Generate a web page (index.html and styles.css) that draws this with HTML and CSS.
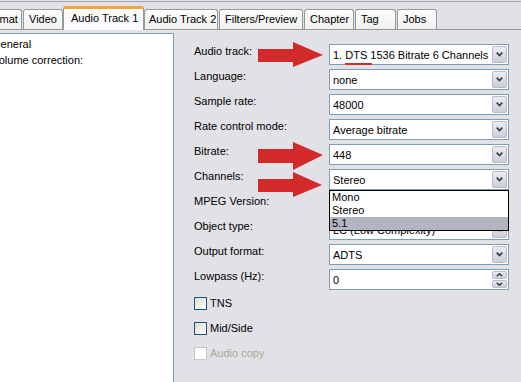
FILE: index.html
```html
<!DOCTYPE html>
<html>
<head>
<meta charset="utf-8">
<link rel="stylesheet" href="styles.css">
</head>
<body>
<div class="window">
  <div class="tabstrip">
    <div class="tab w-format">Format</div>
    <div class="tab w-video">Video</div>
    <div class="tab active w-at1">Audio Track 1</div>
    <div class="tab w-at2">Audio Track 2</div>
    <div class="tab w-filters">Filters/Preview</div>
    <div class="tab w-chapter">Chapter</div>
    <div class="tab w-tag">Tag</div>
    <div class="tab w-jobs">Jobs</div>
  </div>
  <div class="page">
    <div class="tree">
      <div class="tree-item">General</div>
      <div class="tree-item">Volume correction:</div>
    </div>
    <div class="form">
      <div class="grid">
        <div class="label">Audio track:</div>
        <div class="combo"><span class="val">1. DTS 1536 Bitrate 6 Channels</span><span class="btn"><svg width="7" height="5" viewBox="0 0 7 5"><path d="M0.7 0.7 L3.5 3.6 L6.3 0.7" stroke="#3c3c4c" stroke-width="1.7" fill="none"/></svg></span></div>
        <div class="label">Language:</div>
        <div class="combo"><span class="val">none</span><span class="btn"><svg width="7" height="5" viewBox="0 0 7 5"><path d="M0.7 0.7 L3.5 3.6 L6.3 0.7" stroke="#3c3c4c" stroke-width="1.7" fill="none"/></svg></span></div>
        <div class="label">Sample rate:</div>
        <div class="combo"><span class="val">48000</span><span class="btn"><svg width="7" height="5" viewBox="0 0 7 5"><path d="M0.7 0.7 L3.5 3.6 L6.3 0.7" stroke="#3c3c4c" stroke-width="1.7" fill="none"/></svg></span></div>
        <div class="label">Rate control mode:</div>
        <div class="combo"><span class="val">Average bitrate</span><span class="btn"><svg width="7" height="5" viewBox="0 0 7 5"><path d="M0.7 0.7 L3.5 3.6 L6.3 0.7" stroke="#3c3c4c" stroke-width="1.7" fill="none"/></svg></span></div>
        <div class="label">Bitrate:</div>
        <div class="combo"><span class="val">448</span><span class="btn"><svg width="7" height="5" viewBox="0 0 7 5"><path d="M0.7 0.7 L3.5 3.6 L6.3 0.7" stroke="#3c3c4c" stroke-width="1.7" fill="none"/></svg></span></div>
        <div class="label">Channels:</div>
        <div class="combo"><span class="val">Stereo</span><span class="btn"><svg width="7" height="5" viewBox="0 0 7 5"><path d="M0.7 0.7 L3.5 3.6 L6.3 0.7" stroke="#3c3c4c" stroke-width="1.7" fill="none"/></svg></span></div>
        <div class="label">MPEG Version:</div>
        <div class="combo"><span class="val"></span><span class="btn"><svg width="7" height="5" viewBox="0 0 7 5"><path d="M0.7 0.7 L3.5 3.6 L6.3 0.7" stroke="#3c3c4c" stroke-width="1.7" fill="none"/></svg></span></div>
        <div class="label">Object type:</div>
        <div class="combo"><span class="val">LC (Low Complexity)</span><span class="btn"><svg width="7" height="5" viewBox="0 0 7 5"><path d="M0.7 0.7 L3.5 3.6 L6.3 0.7" stroke="#3c3c4c" stroke-width="1.7" fill="none"/></svg></span></div>
        <div class="label">Output format:</div>
        <div class="combo"><span class="val">ADTS</span><span class="btn"><svg width="7" height="5" viewBox="0 0 7 5"><path d="M0.7 0.7 L3.5 3.6 L6.3 0.7" stroke="#3c3c4c" stroke-width="1.7" fill="none"/></svg></span></div>
        <div class="label">Lowpass (Hz):</div>
        <div class="combo spin"><span class="val">0</span><span class="spinbtns"><span class="sbtn"><svg width="7" height="4" viewBox="0 0 7 4"><path d="M0.7 3.3 L3.5 0.7 L6.3 3.3" stroke="#3c3c4c" stroke-width="1.5" fill="none"/></svg></span><span class="sbtn"><svg width="7" height="4" viewBox="0 0 7 4"><path d="M0.7 0.7 L3.5 3.3 L6.3 0.7" stroke="#3c3c4c" stroke-width="1.5" fill="none"/></svg></span></span></div>
      </div>
      <div class="checks">
        <div class="check"><span class="box"></span><span>TNS</span></div>
        <div class="check"><span class="box"></span><span>Mid/Side</span></div>
        <div class="check disabled"><span class="box"></span><span>Audio copy</span></div>
      </div>
    </div>
  </div>
  <div class="popup">
    <div class="item">Mono</div>
    <div class="item">Stereo</div>
    <div class="item sel">5.1</div>
  </div>
  <svg class="marks" width="521" height="382" viewBox="0 0 521 382">
    <polygon points="258,49 293,49 293,42 323,55 293,67 293,62 258,62" fill="#d22a2a"/>
    <polygon points="258,149 293,149 293,142 323,155 293,170 293,163 258,163" fill="#d22a2a"/>
    <polygon points="258,179 293,179 293,172 322,185 293,197 293,192 258,192" fill="#d22a2a"/>
    <rect x="345" y="63" width="27" height="2" fill="#d22a2a"/>
  </svg>
</div>
</body>
</html>
```

FILE: styles.css
```css
html, body {
  margin: 0;
  padding: 0;
  width: 521px;
  height: 382px;
  overflow: hidden;
  background: #e2e1e6;
}

.window {
  position: relative;
  width: 521px;
  height: 381px;
  margin-top: 1px;
  border-top: 1px solid #a3a3a8;
  box-sizing: border-box;
  font-family: "Liberation Sans", Arial, sans-serif;
  font-size: 11px;
  color: #000;
}

.tabstrip {
  display: flex;
  align-items: flex-end;
  height: 27px;
  margin-left: -23px;
  border-bottom: 1px solid #919b9c;
}

.tab {
  box-sizing: border-box;
  height: 20px;
  margin-right: 1px;
  padding: 3px 0 0 5px;
  border: 1px solid #919b9c;
  border-bottom: none;
  border-radius: 3px 3px 0 0;
  background: linear-gradient(#fdfdfd, #f0f0ee);
  white-space: nowrap;
  line-height: 13px;
  overflow: hidden;
}

.tab.active {
  height: 24px;
  margin-bottom: -1px;
  margin-left: -1px;
  margin-right: 0;
  padding: 3px 0 0 7px;
  background: #fcfcfe;
  border-top: 3px solid #f2a63e;
  position: relative;
}

.w-format { width: 45px; }
.w-video { width: 40px; }
.w-at1 { width: 81px; }
.w-at2 { width: 74px; padding-left: 4px; }
.w-filters { width: 84px; }
.w-chapter { width: 50px; }
.w-tag { width: 41px; }
.w-jobs { width: 40px; }

.page {
  display: flex;
  align-items: flex-start;
  margin-left: -12px;
}

.tree {
  box-sizing: border-box;
  width: 186px;
  height: 360px;
  margin-top: 3px;
  padding: 2px 3px;
  border: 1px solid #7f9db9;
  background: #fff;
}

.tree-item {
  line-height: 16px;
  white-space: nowrap;
}

.form {
  margin-left: 20px;
  margin-top: 14px;
}

.grid {
  display: grid;
  grid-template-columns: 135px 180px;
  grid-auto-rows: 21px;
  row-gap: 4px;
}

.label {
  line-height: 15px;
  white-space: nowrap;
}

.combo {
  box-sizing: border-box;
  display: flex;
  align-items: center;
  height: 21px;
  padding-left: 3px;
  border: 1px solid #7f9db9;
  background: #fff;
}

.val {
  flex: 1;
  white-space: nowrap;
  overflow: hidden;
}

.btn {
  box-sizing: border-box;
  display: flex;
  align-items: center;
  justify-content: center;
  width: 15px;
  height: 17px;
  margin-right: 1px;
  border: 1px solid #b9b9cb;
  border-radius: 2px;
  background: linear-gradient(#ececf2, #cdcdda);
}

.spinbtns {
  display: flex;
  flex-direction: column;
  gap: 1px;
  margin-right: 1px;
}

.sbtn {
  box-sizing: border-box;
  display: flex;
  align-items: center;
  justify-content: center;
  width: 15px;
  height: 8px;
  border: 1px solid #b9b9cb;
  border-radius: 2px;
  background: linear-gradient(#ececf2, #cdcdda);
}

.checks {
  display: flex;
  flex-direction: column;
  gap: 12px;
  margin-top: 7px;
}

.check {
  display: flex;
  align-items: center;
  gap: 3px;
  height: 13px;
  line-height: 13px;
}

.box {
  box-sizing: border-box;
  width: 13px;
  height: 13px;
  border: 1px solid #1c5180;
  background: linear-gradient(135deg, #dcdcd6, #ffffff);
}

.check.disabled {
  color: #aca899;
}

.check.disabled .box {
  border-color: #cac8bb;
  background: #fff;
}

.popup {
  position: absolute;
  left: 329px;
  top: 188px;
  box-sizing: border-box;
  width: 180px;
  border: 1px solid #000;
  background: #fff;
}

.item {
  height: 13px;
  line-height: 13px;
  padding-left: 2px;
}

.item.sel {
  background: #b2b4bf;
}

.marks {
  position: absolute;
  left: 0;
  top: -2px;
  pointer-events: none;
}
```
